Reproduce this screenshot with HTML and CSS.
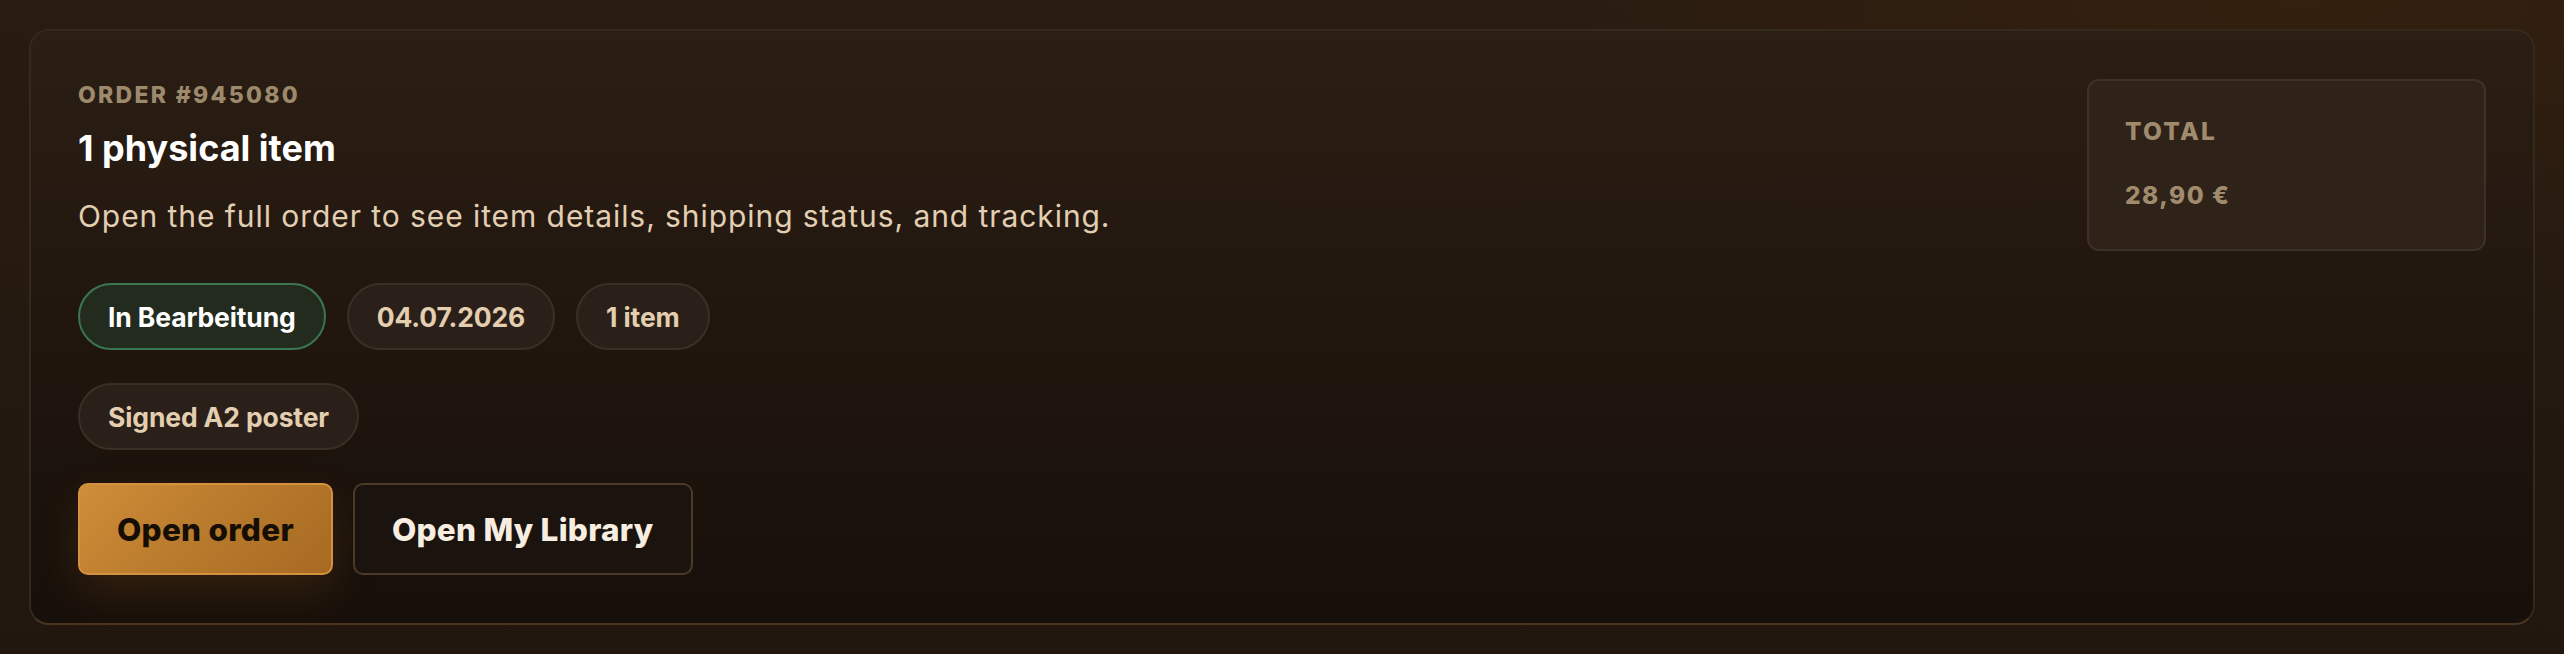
FILE: index.html
```html
<!DOCTYPE html>
<html lang="en">
<head>
<meta charset="utf-8">
<title>Order</title>
<link rel="stylesheet" href="styles.css">
</head>
<body>
<div class="page">
  <section class="card">
    <div class="main">
      <div class="eyebrow">ORDER #945080</div>
      <h2 class="title">1 physical item</h2>
      <p class="desc">Open the full order to see item details, shipping status, and tracking.</p>
      <div class="pills">
        <span class="pill pill-status">In Bearbeitung</span>
        <span class="pill">04.07.2026</span>
        <span class="pill">1 item</span>
      </div>
      <div class="pills pills-second">
        <span class="pill">Signed A2 poster</span>
      </div>
      <div class="actions">
        <a class="btn btn-primary" href="#">Open order</a>
        <a class="btn btn-secondary" href="#">Open My Library</a>
      </div>
    </div>
    <aside class="total">
      <div class="total-label">TOTAL</div>
      <div class="total-value">28,90 €</div>
    </aside>
  </section>
</div>
</body>
</html>
```
FILE: styles.css
```css
html, body {
  margin: 0;
  padding: 0;
}
body {
  width: 2564px;
  height: 654px;
  overflow: hidden;
  font-family: Inter, "Noto Sans", "Liberation Sans", sans-serif;
  background: radial-gradient(ellipse 900px 300px at 2300px 0px, #33200f 0%, rgba(51,32,15,0) 100%),
              linear-gradient(180deg, #281b11 0%, #21170f 100%);
}
.page {
  padding: 29px;
}
.card {
  display: flex;
  align-items: flex-start;
  height: 596px;
  box-sizing: border-box;
  padding: 48px 47px 49px 47px;
  border: 2px solid #35281c;
  border-bottom-color: #4a3522;
  border-radius: 20px;
  background: linear-gradient(180deg, #2b1e14 0%, #22170f 45%, #170f0a 100%);
}
.main {
  flex: 1;
  display: flex;
  flex-direction: column;
  align-items: flex-start;
}
.eyebrow {
  font-size: 23px;
  line-height: 32px;
  font-weight: 800;
  letter-spacing: 0.1em;
  color: #9d8a6d;
}
.title {
  margin: 16px 0 0 0;
  font-size: 36px;
  line-height: 43px;
  font-weight: 700;
  letter-spacing: 0;
  color: #ffffff;
}
.desc {
  margin: 24px 0 0 0;
  font-size: 30px;
  line-height: 44px;
  font-weight: 400;
  letter-spacing: 0.031em;
  color: #e2cfb3;
}
.pills {
  display: flex;
  gap: 21px;
  margin-top: 45px;
}
.pills-second {
  margin-top: 33px;
}
.pill {
  display: flex;
  align-items: center;
  height: 67px;
  box-sizing: border-box;
  padding: 0 28px;
  border: 2px solid #3b2f25;
  border-radius: 34px;
  background: #2a2019;
  color: #e4ceb0;
  font-size: 26.5px;
  font-weight: 700;
  letter-spacing: -0.005em;
}
.pill-status {
  background: #232b1e;
  border-color: #3a7650;
  color: #ffffff;
}
.actions {
  display: flex;
  gap: 20px;
  margin-top: 33px;
}
.btn {
  display: flex;
  align-items: center;
  height: 92px;
  box-sizing: border-box;
  padding: 0 37px;
  border-radius: 10px;
  font-size: 31.5px;
  font-weight: 800;
  letter-spacing: 0.008em;
  text-decoration: none;
}
.btn-primary {
  background: linear-gradient(135deg, #cf8d38 0%, #b87a2c 50%, #a86a22 100%);
  border: 2px solid #d4913f;
  color: #160d05;
  box-shadow: 0 18px 45px rgba(190, 120, 40, 0.16);
}
.btn-secondary {
  background: #1b130d;
  border: 2px solid #4c3a28;
  color: #f7eee1;
}
.total {
  width: 399px;
  height: 172px;
  box-sizing: border-box;
  padding: 34px 36px;
  border: 2px solid #3e3127;
  border-radius: 12px;
  background: #2e2219;
}
.total-label,
.total-value {
  font-size: 24.5px;
  line-height: 32px;
  font-weight: 800;
  letter-spacing: 0.09em;
  color: #a08b6c;
}
.total-value {
  margin-top: 32px;
  letter-spacing: 0.06em;
}
```
